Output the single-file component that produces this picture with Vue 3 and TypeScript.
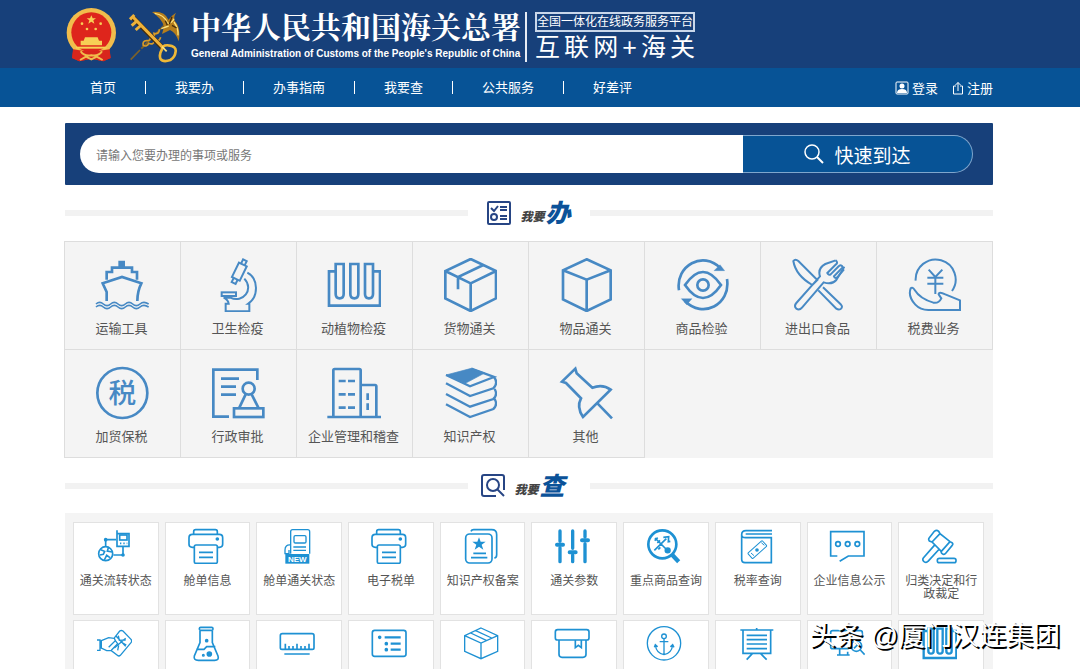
<script setup lang="ts">
import { ref } from 'vue'

interface Tile {
  label: string
  box: string
  art: string
}

const keyword = ref('')
const nav: string[] = ['首页', '我要办', '办事指南', '我要查', '公共服务', '好差评']
const platform: string[] = ['互', '联', '网', '+', '海', '关']

const printer =
  '<path d="M402 247h-6q-10 0-10-9v-20q0-10 10-10h81q10 0 10 10v20q0 9-10 9h-6M400 208v-8q0-6 6-6h59q6 0 6 6v8M416 262h42M416 277h42"/><rect x="402" y="240" width="69" height="55" rx="5"/><circle cx="471" cy="222" r="3" fill="currentColor"/>'

const services: Tile[] = [
  {
    label: '运输工具',
    box: '105 69 162 162',
    art: '<path d="M179 81h12v14h-12z" fill="currentColor"/><path d="M140 134V111h16V98h60v13h15v23M140 198v-27l-12-26 58-19 58 19q-12 24-12 53" /><path d="M108 207q11-10 22 0t22 0 22 0 22 0 22 0 22 0 26 0M108 216q11-10 22 0t22 0 22 0 22 0 22 0 22 0 26 0" stroke-width="5"/>',
  },
  {
    label: '卫生检疫',
    box: '453 69 162 162',
    art: '<g stroke-width="6"><g transform="rotate(26 538 110)"><rect x="525" y="86" width="26" height="48"/><path d="M532 86V72h12v14M531 134v14h13v-14"/></g><path d="M562 113c34 18 34 72 3 93h3v23h-71v-23h9q-2-12-15-18h20c38 18 72-25 42-57"/><rect x="485" y="172" width="43" height="11"/></g>',
  },
  {
    label: '动植物检疫',
    box: '801 69 162 162',
    art: '<path d="M826 109h-19v103h153V109h-19M827 87h24v90q0 13-12 13t-12-13zM871 87h24v90q0 13-12 13t-12-13zM915 87h24v90q0 13-12 13t-12-13z"/>',
  },
  {
    label: '货物通关',
    box: '264 69 162 162',
    art: '<path d="M347 72l76 36v82l-76 38-76-38v-82zM271 108l76 37 76-37M347 145v83M385 90l-76 36v37"/>',
  },
  {
    label: '物品通关',
    box: '612 69 162 162',
    art: '<path d="M695 73l72 33v87l-72 35-71-35v-87zM624 106l71 28 72-28M695 134v94"/>',
  },
  {
    label: '商品检验',
    box: '105 69 162 162',
    art: '<path d="M117 166C105 92 190 45 242 100M261 132c12 78-74 120-126 66M135 150q54-78 108 0-54 78-108 0z"/><path d="M222 107h32l-14-18zM156 191h-32l16 18z" fill="currentColor" stroke-width="1"/><circle cx="189" cy="150" r="17"/>',
  },
  {
    label: '进出口食品',
    box: '453 69 162 162',
    art: '<g stroke-width="6"><path d="M460 78q6-8 15 0l57 57-15 15q-50-29-57-72zM549 157l53 51q8 8 0 14-6 4-13-1l-54-55M587 76l-31 11q-24 13-16 37l-71 80q-8 9 0 17 9 6 17-3l65-76q25 8 38-7l24-40"/><path d="M587 76q8 7 1 12l-26 26q4 8 10 4l24-24q9-7 12 3l-26 27q3 8 10 3l20-24"/></g>',
  },
  {
    label: '税费业务',
    box: '801 69 162 162',
    art: '<g stroke-width="6"><path d="M827 137a60 60 0 1 1 109 31M866 104l20 22 21-22M862 128h48M862 146h48M886 126v51M812 160q-9 24 14 49 15 16 39 16h95v-29l-44-18q-20-10-20 0l8 12q-8 16-24 13-40-12-56-38-6-10-12-5z"/></g>',
  },
  {
    label: '加贸保税',
    box: '105 393 162 162',
    art: '<circle cx="187" cy="474" r="75"/><text x="187" y="504" font-size="83" font-weight="500" text-anchor="middle" fill="currentColor" stroke="none">税</text>',
  },
  {
    label: '行政审批',
    box: '453 393 162 162',
    art: '<path d="M507 545h-47V404h132v31M483 431h54M483 455h45M483 479h45M557 478l-19 40M575 478l20 40"/><circle cx="566" cy="461" r="18"/><rect x="522" y="520" width="88" height="26"/>',
  },
  {
    label: '企业管理和稽查',
    box: '801 393 162 162',
    art: '<path d="M802 546h161M820 546V406q0-4 4-4h74q4 0 4 4v140M902 450h43q4 0 4 4v92M836 438h21M864 438h21M836 478h21M864 478h21M836 518h21M864 518h21M923 475v20M923 505v20"/>',
  },
  {
    label: '知识产权',
    box: '264 393 162 162',
    art: '<path d="M273 420l76-20 40 14-58 31z" fill="currentColor" stroke-width="2"/><path d="M273 420l72 34 72-28-68-25M273 445l72 38 70-23q16-16 2-34M273 477l72 38 70-23q14-12 4-30M273 508l72 38 70-24q14-12 4-30" stroke-width="7"/>',
  },
  {
    label: '其他',
    box: '612 393 162 162',
    art: '<path d="M661 401l-40 39 12 4 45 46q-14 26 6 56l83-82q-24-18-55-6l-47-43zM728 506l43 44"/>',
  },
]

const queries: Tile[] = [
  {
    label: '通关流转状态',
    box: '108 189 108 108',
    art: '<circle cx="137" cy="266" r="21"/><path d="M137 244v-20h31M160 270h29v-24M171 196v48h36v-38h-36M122 254l12 5-4 9-10 2M145 248l-3 10 14 3M133 285l7-14 10 7"/><rect x="179" y="210" width="22" height="15"/><path d="M180 235h4M190 235h4M200 235h2"/><circle cx="137" cy="224" r="3"/><circle cx="189" cy="270" r="3"/>',
  },
  { label: '舱单信息', box: '383 189 108 108', art: printer },
  {
    label: '舱单通关状态',
    box: '657 189 108 108',
    art: '<g stroke-width="4"><path d="M692 266v-66q0-6 6-6h45q6 0 6 6v66M692 240q-17-2-17 15v11h12v-11M700 246h38M700 256h38"/><rect x="702" y="212" width="36" height="22" rx="4"/></g><rect x="676" y="267" width="72" height="29" fill="currentColor" stroke="none"/><text x="712" y="290" font-size="24" font-weight="900" text-anchor="middle" fill="#fff" stroke="none">NEW</text>',
  },
  { label: '电子税单', box: '383 189 108 108', art: printer },
  {
    label: '知识产权备案',
    box: '366 189 108 108',
    art: '<rect x="374" y="207" width="79" height="87" rx="12"/><path d="M390 199q2-5 8-5h54q15 0 15 15v60q0 9-7 10M397 265h38M390 278h49"/><path d="M414 217l5 13h15l-12 9 5 15-13-9-13 9 5-15-12-9h15z" fill="currentColor" stroke="none"/>',
  },
  {
    label: '通关参数',
    box: '642 189 108 108',
    art: '<path d="M660 198v31M660 248v42M698 198v52M698 270v20M735 198v18M735 236v54" stroke-width="10" stroke-linecap="round"/><path d="M651 239h18M689 262h18M726 226h18" stroke-width="12" stroke-linecap="round"/>',
  },
  {
    label: '重点商品查询',
    box: '108 54 108 108',
    art: '<circle cx="157" cy="103" r="42" stroke-width="8"/><path d="M187 135l19 20" stroke-width="13"/><path d="M135 84l36 36M134 92l9-9M142 99l8-8M133 121l36-35M160 82l16-2-1 15 6-1M145 118l6-6"/><circle cx="173" cy="121" r="7" fill="currentColor"/>',
  },
  {
    label: '税率查询',
    box: '381 54 108 108',
    art: '<path d="M483 62h-78q-13 0-13 12v74q0 10 10 10h79V83h-77q-12 0-12-9M404 72h79"/><g stroke-width="3"><rect x="410" y="108" width="58" height="22" rx="3" transform="rotate(-42 439 119)"/><path d="M420 129l9 8M451 98l9 8"/></g><circle cx="438" cy="120" r="3" fill="currentColor"/>',
  },
  {
    label: '企业信息公示',
    box: '87 54 108 108',
    art: '<path d="M112 138H92V65h100v73h-47l-26 16"/><circle cx="114" cy="102" r="7"/><circle cx="143" cy="102" r="7"/><circle cx="172" cy="102" r="7"/>',
  },
  {
    label: '归类决定和行政裁定',
    box: '360 54 108 108',
    art: '<path d="M400 64q7-6 13 0l4 7 30 24 6 3q5 4 0 9l-20 24q-6 5-11-1l-3-8-26-26-8-3q-4-5 0-10zM417 71l-24 25M447 95l-26 29M402 104l-35 40q-4 6 2 11 7 5 12-1l34-37"/><rect x="409" y="145" width="56" height="13" rx="6"/>',
  },
  {
    label: '',
    box: '108 486 108 108',
    art: '<g stroke-width="4"><path d="M111 528h9v31h-9M124 530l22-9 16 2 17-22q5-3 10 0l24 25q4 5 0 10l-32 38q-4 4-9 0l-18-14h-14l-16-8zM146 550l20-20-3-7M166 530l7 9-19 20"/><path d="M168 516l29 31M163 552l34-29M175 515l3 14 19-1M176 544l-3 15M186 536l13 7"/></g>',
  },
  {
    label: '',
    box: '383 486 108 108',
    art: '<path d="M419 500v36l-17 40q-3 13 12 13h49q14 0 10-13l-17-40v-36M408 556h23l8-8h26"/><rect x="417" y="490" width="41" height="9" rx="4"/><circle cx="439" cy="530" r="3" fill="currentColor"/><circle cx="447" cy="570" r="6" fill="currentColor"/><circle cx="429" cy="574" r="2"/>',
  },
  {
    label: '',
    box: '657 486 108 108',
    art: '<path d="M666 556q-5 0-5-5v-36q0-6 6-6h89q6 0 6 6v36q0 5-5 5M673 570h76M676 556v-17M687 556v-10M699 556v-10M711 556v-17M723 556v-10M735 556v-10M747 556v-17M666 556h92"/>',
  },
  {
    label: '',
    box: '93 486 108 108',
    art: '<rect x="97" y="499" width="101" height="78" rx="7"/><path d="M134 520h48M152 539h30M152 557h30" stroke-width="7"/><circle cx="119" cy="520" r="3" fill="currentColor"/><circle cx="139" cy="539" r="3" fill="currentColor"/><circle cx="139" cy="557" r="3" fill="currentColor"/>',
  },
  {
    label: '',
    box: '366 486 108 108',
    art: '<path d="M420 492l50 23v47l-50 22-49-22v-47zM371 515l49 22 50-22M420 537v47M404 500l48 22M389 507l47 22" stroke-width="4"/>',
  },
  {
    label: '',
    box: '642 486 108 108',
    art: '<rect x="646" y="497" width="101" height="31" rx="7"/><path d="M657 528v43q0 9 9 9h63q9 0 9-9v-43M706 528v23l9-7 9 7v-23"/>',
  },
  {
    label: '',
    box: '108 351 108 108',
    art: '<g stroke-width="4"><circle cx="162" cy="403" r="50"/><circle cx="162" cy="382" r="7"/><path d="M162 389v47M149 398h26M136 408q3 25 26 29 23-4 26-29M133 415l3-8 7 6M181 413l7-6 4 8"/></g>',
  },
  {
    label: '',
    box: '381 351 108 108',
    art: '<path d="M388 363h99M396 363v70h83v-70M407 379h61M407 392h61M407 405h61M407 419h61M424 434l-17 18M449 434l18 18M437 357v6"/>',
  },
  {
    label: '',
    box: '87 351 108 108',
    art: '<path d="M146 419H98q-6 0-6-6v-42q0-6 6-6h83q6 0 6 6v16M119 419v18M143 428v9M111 438h38"/><circle cx="169" cy="411" r="16"/><path d="M181 423l13 14M162 418l14-14"/>',
  },
  {
    label: '',
    box: '360 351 108 108',
    art: '<path d="M382 366h-14v81h98v-81h-12M382 359h16v67q0 8-8 8t-8-8zM409 359h16v67q0 8-8 8t-8-8zM436 359h16v67q0 8-8 8t-8-8z" stroke-width="7"/>',
  },
]
</script>

<template>
  <div class="page">
    <header class="masthead">
      <svg class="emblem" viewBox="48 24 153 162" aria-hidden="true">
        <path d="M70 140l-4 34 22 10 36-8 36 8 22-10-4-34z" fill="#d8261c" />
        <circle cx="124" cy="98" r="74" fill="#f1bd4c" />
        <circle cx="124" cy="97" r="60" fill="#de251c" />
        <path d="M124 46l4 9h10l-8 6 3 10-9-6-9 6 3-10-8-6h10z" fill="#f7cf55" />
        <g fill="#f7cf55">
          <circle cx="96" cy="71" r="4" /><circle cx="111" cy="87" r="4" />
          <circle cx="137" cy="87" r="4" /><circle cx="152" cy="71" r="4" />
          <path d="M105 112h38l4 10h9v14H92v-14h9z" />
          <path d="M78 140h92v6H78z" />
        </g>
        <path d="M70 148q54 12 108 0l4 26-22 10-36-8-36 8-22-10z" fill="#d8261c" />
        <path d="M92 154q10 16 32 12 22 4 32-12M90 180l18-10 16 8 16-8 18 10" fill="none" stroke="#f1bd4c" stroke-width="6" />
      </svg>
      <svg class="keys" viewBox="234 30 156 159" fill="none" aria-hidden="true">
        <path d="M242 179l28-29M274 146l88-90" stroke="#7d6128" stroke-width="5" />
        <path d="M280 138q-4-16 10-16t10-12q16 4 12-10 16 4 16-12M278 136q14 6 18-6 14 6 18-8 14 4 18-10" stroke="#d79b28" stroke-width="5" />
        <path d="M306 36q38-4 50 24 8-14 22-22-8 14-4 24 20 22 12 62-8-26-26-34l-24 12 6-22q-6-24-36-44z" fill="#b57d1c" />
        <path d="M314 40q28 4 38 28M372 66q14 20 12 40M352 70q14 0 20-14M334 86l22-8" stroke="#ffe27a" stroke-width="4" />
        <path d="M346 62l6 14M366 50l-8 22M380 84l-14-8" stroke="#442c0c" stroke-width="4" />
        <path d="M250 54l88 90" stroke="#442c0c" stroke-width="14" />
        <path d="M250 52l88 90" stroke="#eeb23a" stroke-width="9" />
        <path d="M240 58l13-13M245 77l17-15M257 90l17-15" stroke="#eeb23a" stroke-width="9" />
        <path d="M335 150q2-16 20-14 24 2 22 18-2 18-16 26-22 8-30-4-4-14 4-26z" stroke="#efb837" stroke-width="8" />
        <path d="M336 140l14 14" stroke="#ffe27a" stroke-width="5" />
      </svg>
      <div class="title">
        <h1>中华人民共和国海关总署</h1>
        <p>General Administration of Customs of the People's Republic of China</p>
      </div>
      <div class="platform">
        <p class="tag">全国一体化在线政务服务平台</p>
        <p class="slogan"><span v-for="c in platform" :key="c">{{ c }}</span></p>
      </div>
    </header>

    <nav class="nav">
      <ul>
        <li v-for="n in nav" :key="n"><a href="#">{{ n }}</a></li>
      </ul>
      <div class="account">
        <a href="#">
          <svg width="14" height="14" viewBox="0 0 14 14" aria-hidden="true">
            <rect x="1" y="1" width="12" height="12" rx="1" fill="none" stroke="#fff" />
            <circle cx="7" cy="5" r="2.5" fill="#fff" /><path d="M2 12q0-4 5-4t5 4z" fill="#fff" />
          </svg>登录</a>
        <a href="#">
          <svg width="12" height="14" viewBox="0 0 12 14" fill="none" stroke="#fff" aria-hidden="true">
            <path d="M4 5H1.500v8h9V5H8M6 10V1.500M3.500 4L6 1.500 8.500 4" />
          </svg>注册</a>
      </div>
    </nav>

    <main class="content">
      <form class="search" @submit.prevent>
        <input v-model="keyword" type="text" aria-label="搜索" placeholder="请输入您要办理的事项或服务" />
        <button type="submit">
          <svg width="20" height="20" viewBox="0 0 20 20" fill="none" stroke="#fff" aria-hidden="true">
            <circle cx="8" cy="8" r="7" stroke-width="1.500" /><path d="M13 13l6 6" stroke-width="2" />
          </svg>快速到达
        </button>
      </form>

      <h2 class="heading">
        <span class="caption">
          <svg width="24" height="24" viewBox="0 0 24 24" fill="none" stroke="#274584" stroke-width="2" aria-hidden="true">
            <rect x="1" y="1" width="22" height="22" rx="1" />
            <path d="M4 7l3 3 4-5M13 6h7M13 9h7M13 15h7M13 18h7" /><circle cx="7" cy="16" r="3" />
          </svg>
          <span class="small">我要</span><span class="big">办</span>
        </span>
      </h2>
      <section class="services">
        <a v-for="s in services" :key="s.label" href="#" class="service">
          <svg :viewBox="s.box" aria-hidden="true" v-html="s.art"></svg>
          <span>{{ s.label }}</span>
        </a>
      </section>

      <h2 class="heading second">
        <span class="caption">
          <svg width="24" height="24" viewBox="0 0 24 24" fill="none" stroke="#274584" stroke-width="2" aria-hidden="true">
            <path d="M15 22H3q-2 0-2-2V3q0-2 2-2h18q2 0 2 2v13" />
            <circle cx="12" cy="11" r="6" /><path d="M16 15l7 7" />
          </svg>
          <span class="small">我要</span><span class="big">查</span>
        </span>
      </h2>
      <section class="queries">
        <a v-for="(q, i) in queries" :key="i" href="#" class="query">
          <svg :viewBox="q.box" aria-hidden="true" v-html="q.art"></svg>
          <span>{{ q.label }}</span>
        </a>
      </section>
    </main>

    <p class="watermark">头条 @厦门汉连集团</p>
  </div>
</template>

<style>
body {
  margin: 0;
  background: #fff;
}
</style>

<style scoped>
.page {
  position: relative;
  height: 100vh;
  overflow: hidden;
  font-family: "Liberation Sans", "Noto Sans CJK SC", sans-serif;
  color: #555;
}
h1, h2, p, ul {
  margin: 0;
  padding: 0;
}
a {
  color: inherit;
  text-decoration: none;
}
.masthead {
  display: flex;
  align-items: center;
  height: 68px;
  padding: 0 87px 0 66px;
  box-sizing: border-box;
  background: #17407a;
  color: #fff;
}
.emblem {
  width: 51px;
  height: 54px;
  margin-top: 2px;
}
.keys {
  width: 52px;
  height: 53px;
  margin: 4px 11px 0 11px;
}
.title h1 {
  margin-bottom: 4px;
  font: 700 30px/36px "Noto Serif CJK SC", "Noto Sans CJK SC", serif;
  white-space: nowrap;
}
.title {
  margin-right: 4px;
}
.title p {
  font-size: 10px;
  font-weight: 700;
  line-height: 14px;
  white-space: nowrap;
}
.platform {
  margin-top: 6px;
  padding-left: 8px;
  border-left: 2px solid #e6ecf5;
}
.tag {
  border: 2px solid #c9d7ea;
  font-size: 12px;
  line-height: 16px;
  text-align: center;
  white-space: nowrap;
}
.slogan {
  display: flex;
  justify-content: space-between;
  font-size: 25px;
  line-height: 30px;
}
.nav {
  display: flex;
  justify-content: space-between;
  align-items: center;
  height: 39px;
  padding: 0 87px 0 61px;
  background: #075396;
  color: #fff;
  font-size: 13px;
}
.nav ul {
  display: flex;
  list-style: none;
}
.nav li {
  padding: 0 29px;
  line-height: 13px;
}
.nav li + li {
  border-left: 1px solid #fff;
}
.account {
  display: flex;
  gap: 14px;
}
.account a {
  display: flex;
  align-items: center;
  gap: 3px;
}
.content {
  padding: 16px 87px 0 65px;
}
.search {
  display: flex;
  padding: 12px 20px 12px 15px;
  border-radius: 1px;
  background: #17407a;
}
.search input {
  flex: 1;
  min-width: 0;
  height: 38px;
  padding: 0 16px;
  box-sizing: border-box;
  border: 0;
  border-radius: 19px 0 0 19px;
  outline: 0;
  background: #fff;
  font: 12px "Noto Sans CJK SC", sans-serif;
}
.search input::placeholder {
  color: #777;
}
.search button {
  display: flex;
  justify-content: center;
  align-items: center;
  gap: 10px;
  width: 230px;
  height: 38px;
  border: 1px solid #7fa6cd;
  border-left: 0;
  border-radius: 0 19px 19px 0;
  background: #075396;
  color: #fff;
  font: 19px "Noto Sans CJK SC", sans-serif;
}
.heading {
  display: flex;
  align-items: center;
  height: 56px;
}
.heading.second {
  height: 55px;
}
.heading::before,
.heading::after {
  content: "";
  flex: 1;
  height: 6px;
  background: #f2f2f2;
}
.caption {
  display: flex;
  align-items: flex-end;
  justify-content: center;
  width: 122px;
  height: 24px;
  box-sizing: border-box;
  line-height: 24px;
  font-style: italic;
}
.second .caption {
  padding-right: 12px;
}
.small {
  margin-left: 9px;
  font-size: 12px;
  font-weight: 900;
  line-height: 16px;
  color: #444;
}
.big {
  margin-left: 1px;
  font-size: 25px;
  font-weight: 900;
  color: #0b5299;
}
.services {
  display: grid;
  grid-template-columns: repeat(8, 1fr);
  margin-left: -1px;
  border-top: 1px solid #ddd;
  border-left: 1px solid #ddd;
  background: #f4f4f4;
}
.service {
  display: flex;
  flex-direction: column;
  align-items: center;
  height: 108px;
  padding-top: 16px;
  box-sizing: border-box;
  border-right: 1px solid #ddd;
  border-bottom: 1px solid #ddd;
  font-size: 13px;
  line-height: 20px;
}
.service svg {
  width: 54px;
  height: 54px;
  margin: 0 2px 7px 0;
  fill: none;
  stroke: currentColor;
  stroke-width: 8;
  color: #4789c4;
}
.service span {
  margin-right: 2px;
}
.queries {
  display: grid;
  grid-template-columns: repeat(10, 1fr);
  gap: 5px 6px;
  padding: 9px 9px 9px 8px;
  background: #f4f4f4;
}
.query {
  display: flex;
  flex-direction: column;
  align-items: center;
  height: 93px;
  padding: 5px 4px 0;
  box-sizing: border-box;
  border: 1px solid #e2e2e2;
  background: #fff;
  font-size: 12px;
  line-height: 13px;
  text-align: center;
}
.query svg {
  width: 36px;
  height: 36px;
  margin: 0 4px 11px 0;
  fill: none;
  stroke: currentColor;
  stroke-width: 5;
  color: #1e91d3;
}
.watermark {
  position: absolute;
  right: 20px;
  bottom: 14px;
  color: #fff;
  font-size: 27px;
  line-height: 38px;
  text-shadow: 2px 2px 0 #000;
}
</style>
